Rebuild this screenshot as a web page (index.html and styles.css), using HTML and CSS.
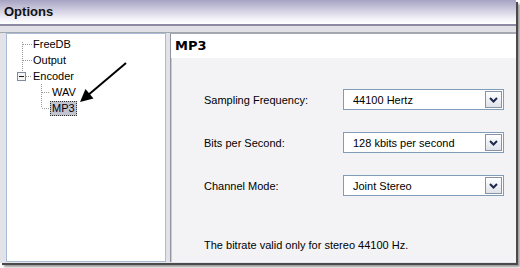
FILE: index.html
```html
<!DOCTYPE html>
<html>
<head>
<meta charset="utf-8">
<link rel="stylesheet" href="styles.css">
</head>
<body>
<div class="window">
  <div class="titlebar">Options</div>
  <div class="band"></div>
  <div class="main">
    <div class="tree">
      <div class="node"><span class="exp none"></span><span class="label">FreeDB</span></div>
      <div class="node"><span class="exp none"></span><span class="label">Output</span></div>
      <div class="node"><span class="exp"><svg width="9" height="9" viewBox="0 0 9 9"><rect x="0.5" y="0.5" width="8" height="8" fill="#f4f4f4" stroke="#7f8a9e"/><path d="M2 4.5 H7" stroke="#1a1a1a" stroke-width="1"/></svg></span><span class="label">Encoder</span></div>
      <div class="node child"><span class="exp none"></span><span class="label">WAV</span></div>
      <div class="node child"><span class="exp none"></span><span class="label selected">MP3</span></div>
      <svg class="overlay" width="158" height="120" viewBox="0 0 158 120">
        <g stroke="#9a9a9a" stroke-width="1" stroke-dasharray="1 1" fill="none">
          <path d="M15.5 8 V37"/>
          <path d="M16 10.5 H25"/>
          <path d="M16 26.5 H25"/>
          <path d="M19 42.5 H25"/>
          <path d="M34.5 50 V74"/>
          <path d="M35 58.5 H43"/>
          <path d="M35 74.5 H43"/>
        </g>
        <line x1="119" y1="29" x2="80" y2="62" stroke="#000" stroke-width="2"/>
        <polygon points="73,68 86.5,64.5 78.5,55" fill="#000"/>
      </svg>
    </div>
    <div class="panel">
      <div class="panel-head">MP3</div>
      <div class="panel-body">
        <div class="row">
          <span class="field-label">Sampling Frequency:</span>
          <div class="combo"><span class="combo-text">44100 Hertz</span><span class="combo-btn"><svg width="15" height="15" viewBox="0 0 15 15"><path d="M4 6 L7.5 9.5 L11 6" stroke="#1d2a4e" stroke-width="2" fill="none"/></svg></span></div>
        </div>
        <div class="row">
          <span class="field-label">Bits per Second:</span>
          <div class="combo"><span class="combo-text">128 kbits per second</span><span class="combo-btn"><svg width="15" height="15" viewBox="0 0 15 15"><path d="M4 6 L7.5 9.5 L11 6" stroke="#1d2a4e" stroke-width="2" fill="none"/></svg></span></div>
        </div>
        <div class="row">
          <span class="field-label">Channel Mode:</span>
          <div class="combo"><span class="combo-text">Joint Stereo</span><span class="combo-btn"><svg width="15" height="15" viewBox="0 0 15 15"><path d="M4 6 L7.5 9.5 L11 6" stroke="#1d2a4e" stroke-width="2" fill="none"/></svg></span></div>
        </div>
        <p class="note">The bitrate valid only for stereo 44100 Hz.</p>
      </div>
    </div>
  </div>
</div>
</body>
</html>
```
FILE: styles.css
```css
html, body {
  margin: 0;
  padding: 0;
  background: #ffffff;
  width: 520px;
  height: 268px;
  overflow: hidden;
  font-family: "Liberation Sans", Arial, sans-serif;
  font-size: 11px;
  color: #000;
}

.window {
  width: 516px;
  height: 263px;
  display: flex;
  flex-direction: column;
  background: #e3e2e9;
  box-shadow: 2px 2px 0 #4a4a4a, 4px 4px 2px #9a9a9a;
}

.titlebar {
  height: 24px;
  line-height: 24px;
  padding-left: 4px;
  font-weight: bold;
  font-size: 13px;
  color: #111;
  background: linear-gradient(#a6a2c2 0%, #c9c6dc 35%, #f0eff6 75%, #ffffff 100%);
  border-bottom: 2px solid #8d8aa5;
}

.band {
  height: 6px;
  background: #e1e0e7;
  border-bottom: 1px solid #a2a6ae;
}

.main {
  flex: 1;
  display: flex;
  gap: 4px;
  padding: 0 0 1px 6px;
  min-height: 0;
}

.tree {
  position: relative;
  width: 158px;
  background: #ffffff;
  border: 1px solid #a9bcd6;
  padding-top: 2px;
}

.node {
  display: flex;
  align-items: center;
  height: 16px;
  padding-left: 10px;
}

.node.child {
  padding-left: 29px;
}

.exp {
  width: 9px;
  height: 9px;
  margin-right: 7px;
  display: flex;
}

.exp.none {
  visibility: hidden;
}

.label {
  line-height: 14px;
  white-space: nowrap;
}

.selected {
  margin-left: -2px;
  padding: 0 2px;
  background: #c3c4d2;
  outline: 1px dotted #333;
  outline-offset: -1px;
  line-height: 15px;
}

.overlay {
  position: absolute;
  left: 0;
  top: 0;
  pointer-events: none;
}

.panel {
  flex: 1;
  display: flex;
  flex-direction: column;
  border-top: 1px solid #a7a8b2;
  border-left: 1px solid #8f93a0;
  box-shadow: inset 1px 0 0 #c9cdd6;
  background: #f3f3f6;
}

.panel-head {
  height: 24px;
  line-height: 24px;
  padding-left: 4px;
  background: #ffffff;
  font-family: "DejaVu Sans", sans-serif;
  font-weight: bold;
  font-size: 13px;
}

.panel-body {
  flex: 1;
  display: flex;
  flex-direction: column;
  gap: 22px;
  padding: 31px 0 10px 33px;
}

.row {
  display: flex;
  align-items: center;
  height: 21px;
}

.field-label {
  width: 139px;
}

.combo {
  width: 161px;
  height: 21px;
  box-sizing: border-box;
  border: 1px solid #7f9db9;
  background: #ffffff;
  display: flex;
  align-items: center;
  padding: 1px;
}

.combo-text {
  flex: 1;
  padding-left: 8px;
}

.combo-btn {
  width: 17px;
  height: 17px;
  box-sizing: border-box;
  border: 1px solid #8a93a6;
  background: linear-gradient(#ffffff, #dfe2ea);
  display: flex;
  align-items: center;
  justify-content: center;
}

.note {
  margin: auto 0 0 0;
  line-height: 14px;
}
```
